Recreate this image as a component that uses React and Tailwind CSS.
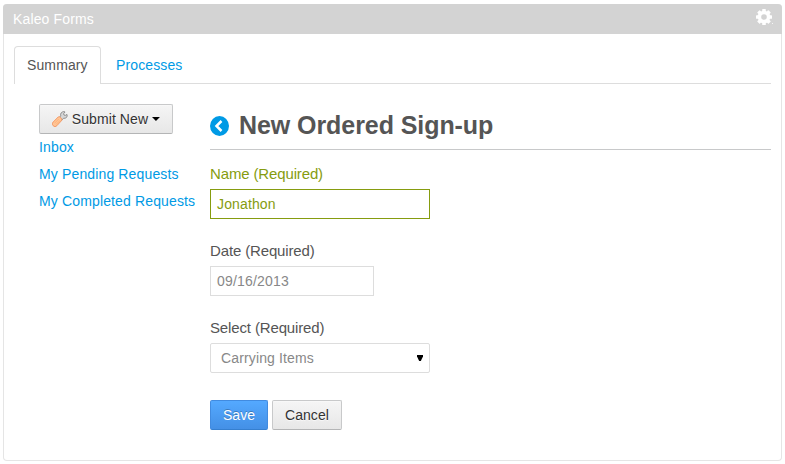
import React from "react";

function Gear() {
  return (
    <svg width="18" height="18" viewBox="0 0 18 18" className="block">
      <g fill="#fff">
        <circle cx="8" cy="8" r="6.3" />
        {[0, 45, 90, 135].map((a) => (
          <rect key={a} x="6.2" y="0" width="3.6" height="16" rx="0.6" transform={`rotate(${a} 8 8)`} />
        ))}
        <rect x="16" y="14" width="1" height="1" opacity="0.8" />
      </g>
      <circle cx="8" cy="8" r="2.8" fill="#d3d3d3" />
    </svg>
  );
}

function Wrench() {
  return (
    <svg width="16" height="16" viewBox="0 0 16 16" className="block">
      <path
        d="M7 7 8.8 4.8C8.3 2.5 9.5.7 12 .5L13.2.9 11.8 2.6 12.1 4 13.6 4.3 15.2 3.4C16 5.8 14.2 7.7 11.6 7.3L9.6 9.4Z"
        fill="#d5d6d7"
        stroke="#858585"
        strokeWidth="0.9"
      />
      <path
        d="M6.3 5.9Q7.4 5.2 8.8 6.6 10.5 8.4 9.7 9.6L4.9 14.8C3.8 16 2.3 15.9 1.2 14.8 0 13.6.1 12.2 1.2 11.1Z"
        fill="#ffc596"
        stroke="#f3925a"
        strokeWidth="0.9"
      />
      <path d="M2.7 12.2 6.8 8M4.2 13.4 8.2 9.4" stroke="#ffa96b" strokeWidth="0.7" />
    </svg>
  );
}

function BackIcon() {
  return (
    <svg width="19" height="20" viewBox="0 0 19 20" className="block">
      <ellipse cx="9.5" cy="10" rx="9.5" ry="10" fill="#009ae5" />
      <path d="M11.5 5 6.5 10l5 5" fill="none" stroke="#fff" strokeWidth="2.5" />
    </svg>
  );
}

const grayButton =
  "flex h-[30px] items-center rounded-[2px] border border-[#c8c9ca] border-b-[#b4b5b6] bg-linear-to-b from-[#f5f5f5] to-[#e7e7e7] px-3 text-[#333] shadow-[inset_0_1px_0_rgba(255,255,255,0.3)] [text-shadow:0_1px_1px_rgba(255,255,255,0.75)]";

export default function App() {
  return (
    <div className="h-[464px] w-[785px] bg-white pt-1 pl-[3px] font-['Liberation_Sans',Arial,sans-serif] text-[14px] leading-5 text-[#555]">
      <section className="h-[457px] w-[779px] rounded-[4px] border border-t-0 border-[#e5e5e5]">
        <header className="-mx-px flex h-[30px] items-center justify-between rounded-t-[4px] bg-[#d3d3d3] pr-2 pl-[10px] text-white">
          <h1 className="tracking-[0.14px]">Kaleo Forms</h1>
          <div className="-mt-[3px]">
            <Gear />
          </div>
        </header>

        <nav className="mt-3 mr-[10px] ml-[10px] flex h-[38px] border-b border-[#ddd] tracking-[0.12px]">
          <a className="h-[38px] w-[87px] rounded-t-[4px] border border-b-0 border-[#ddd] bg-white pt-[8px] pl-3">
            Summary
          </a>
          <a className="pt-[9px] pl-[15px] text-[#009ae5]">Processes</a>
        </nav>

        <div className="mr-[10px] ml-[35px] flex pt-5">
          <aside className="w-[171px] whitespace-nowrap">
            <button className={`${grayButton} w-[134px]`}>
              <Wrench />
              <span className="ml-1 tracking-[0.08px]">Submit New</span>
              <svg width="8" height="4" viewBox="0 0 8 4" className="ml-1">
                <path d="M0 0h8L4 4z" fill="#000" />
              </svg>
            </button>
            <ul className="mt-[3px] leading-5 tracking-[0.14px] text-[#009ae5]">
              <li>Inbox</li>
              <li className="mt-[7px]">My Pending Requests</li>
              <li className="mt-[7px]">My Completed Requests</li>
            </ul>
          </aside>

          <main className="flex-1">
            <div className="flex h-[46px] items-center gap-[10px] border-b border-[#c8c9ca] pb-[1px]">
              <BackIcon />
              <h2 className="-mt-[3px] text-[25px] leading-10 font-bold tracking-[-0.07px]">New Ordered Sign-up</h2>
            </div>

            <form className="text-[15px] tracking-[-0.14px]">
              <div className="mt-[14px] text-[#869c0f]">
                <label className="block h-[25px]">Name (Required)</label>
                <div className="flex h-[30px] w-[220px] items-center border border-[#869c0f] px-1.5 text-[14px] tracking-[0.14px]">
                  Jonathon
                </div>
              </div>
              <div className="mt-[22px]">
                <label className="block h-[25px]">Date (Required)</label>
                <div className="flex h-[30px] w-[164px] items-center border border-[#ddd] px-1.5 text-[14px] tracking-[0.18px] text-[#888]">
                  09/16/2013
                </div>
              </div>
              <div className="mt-[22px]">
                <label className="block h-[25px]">Select (Required)</label>
                <div className="flex h-[30px] w-[220px] items-center justify-between rounded-[2px] border border-[#ddd] pr-1.5 pl-[10px] text-[14px] tracking-[0.14px] text-[#888]">
                  Carrying Items
                  <svg width="6" height="6" viewBox="0 0 6 6" className="-mt-px">
                    <path d="M0 0h6v1.5L3.8 6H2.2L0 1.5z" fill="#000" />
                  </svg>
                </div>
              </div>
              <div className="mt-[27px] flex gap-1 text-[14px] tracking-[0.05px]">
                <button
                  type="button"
                  className="h-[30px] w-[58px] rounded-[2px] border border-[#418be0] border-b-[#357fd0] bg-linear-to-b from-[#54a9ff] to-[#4490e6] text-white [text-shadow:0_-1px_0_rgba(0,0,0,0.25)]"
                >
                  Save
                </button>
                <button type="button" className={`${grayButton} w-[70px]`}>
                  Cancel
                </button>
              </div>
            </form>
          </main>
        </div>
      </section>
    </div>
  );
}
